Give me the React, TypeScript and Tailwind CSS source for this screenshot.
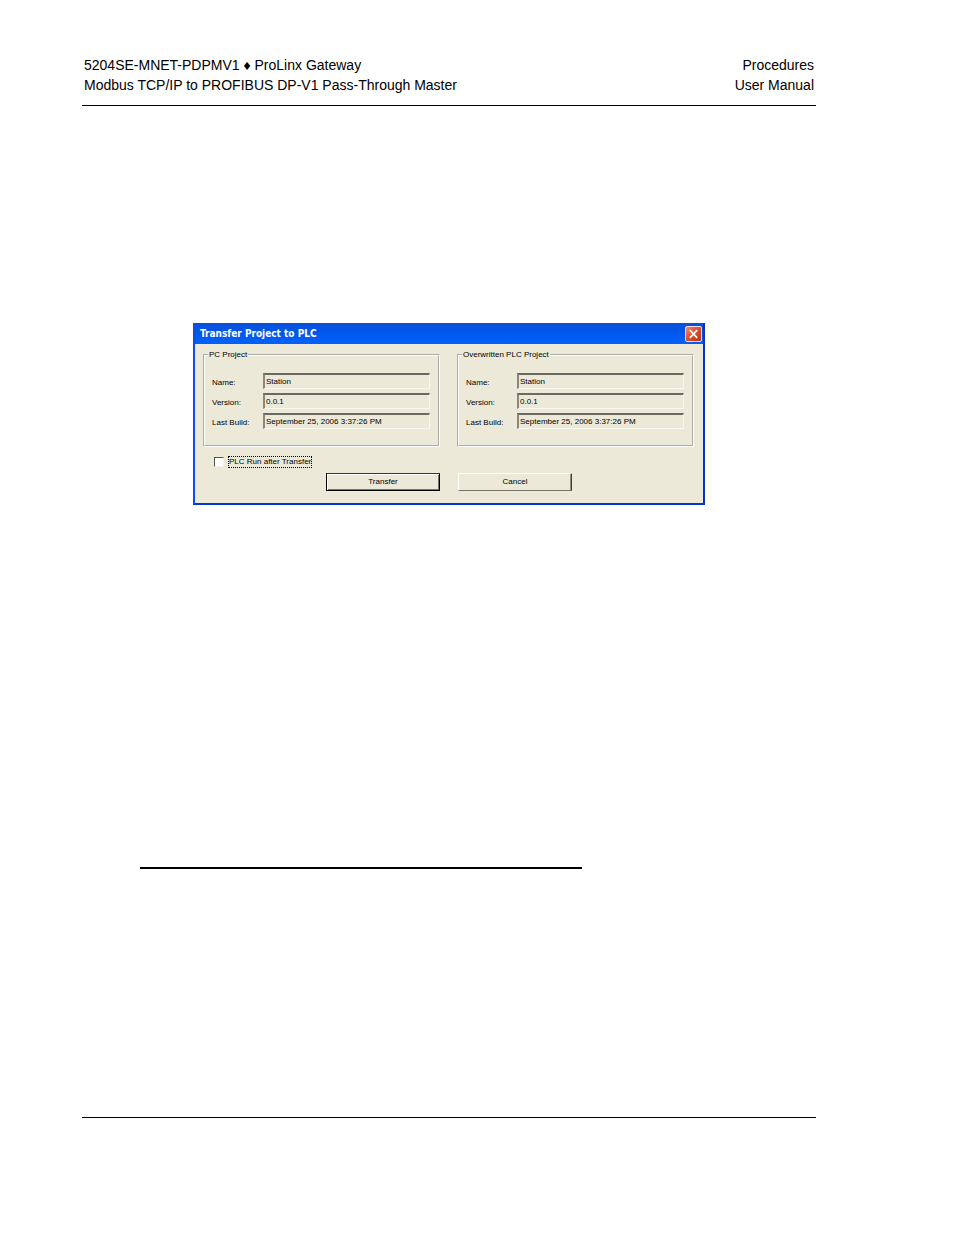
type ProjectInfo = {
  id: string;
  title: string;
  name: string;
  version: string;
  lastBuild: string;
};

const projects: ProjectInfo[] = [
  { id: "pc", title: "PC Project", name: "Station", version: "0.0.1", lastBuild: "September 25, 2006 3:37:26 PM" },
  { id: "plc", title: "Overwritten PLC Project", name: "Station", version: "0.0.1", lastBuild: "September 25, 2006 3:37:26 PM" },
];

function Field({ id, label, value }: { id: string; label: string; value: string }) {
  return (
    <div className="flex h-4 items-stretch">
      <label htmlFor={id} className="w-[51px] shrink-0 pt-1 whitespace-nowrap">
        {label}
      </label>
      <input
        id={id}
        readOnly
        defaultValue={value}
        className="min-w-0 flex-1 border-t-2 border-r border-b border-l-2 border-t-[#6b6a62] border-r-[#f8f7f0] border-b-[#f8f7f0] border-l-[#8a887d] bg-[#ece9d8] pl-px outline-none"
      />
    </div>
  );
}

function ProjectGroup({ project }: { project: ProjectInfo }) {
  return (
    <fieldset className="min-w-0 border-2 border-white pt-3 pb-4 [border-style:groove]">
      <legend className="ml-[3px] px-px leading-3">{project.title}</legend>
      <div className="flex flex-col gap-1 pr-2 pl-[7px]">
        <Field id={`${project.id}-name`} label="Name:" value={project.name} />
        <Field id={`${project.id}-version`} label="Version:" value={project.version} />
        <Field id={`${project.id}-build`} label="Last Build:" value={project.lastBuild} />
      </div>
    </fieldset>
  );
}

function TransferDialog() {
  return (
    <section
      aria-label="Transfer Project to PLC"
      className="w-full max-w-[512px] border-x-2 border-b-2 border-l-[#0a50e8] border-r-[#0430c8] border-b-[#0438d0] bg-[#ece9d8] font-['Liberation_Sans',sans-serif] text-[8px] leading-3 text-black"
    >
      <div className="flex h-[21px] items-center justify-between bg-linear-to-b from-[#0a4fd8] via-[#0058ee] to-[#0062fb] pr-px pl-[5px]">
        <h1 className="font-['DejaVu_Sans_Condensed','DejaVu_Sans',sans-serif] text-[10px] font-bold text-white">
          Transfer Project to PLC
        </h1>
        <button type="button" aria-label="Close">
          <svg viewBox="0 0 17 16" className="block h-4 w-[17px]">
            <defs>
              <linearGradient id="close-face" x1="0" y1="0" x2="1" y2="1">
                <stop offset="0" stopColor="#f09078" />
                <stop offset="0.45" stopColor="#e05030" />
                <stop offset="1" stopColor="#b83210" />
              </linearGradient>
            </defs>
            <rect x="0.5" y="0.5" width="16" height="15" rx="1.5" fill="url(#close-face)" stroke="#f4d8d8" />
            <path d="M4.8 4.2 L12.2 11.8 M12.2 4.2 L4.8 11.8" stroke="#fff" strokeWidth="1.7" />
          </svg>
        </button>
      </div>
      <div className="pt-[5px] pr-[9px] pb-3 pl-2">
        <div className="grid grid-cols-2 gap-[17px]">
          {projects.map((project) => (
            <ProjectGroup key={project.id} project={project} />
          ))}
        </div>
        <div className="mt-[9px] flex items-center gap-1 pl-[11px]">
          <input
            id="run-after"
            type="checkbox"
            className="size-[10px] appearance-none border border-t-[#55544d] border-r-[#f4f2e6] border-b-[#f4f2e6] border-l-[#55544d] bg-white"
          />
          <label htmlFor="run-after" className="border border-dotted border-black leading-[10px]">
            PLC Run after Transfer
          </label>
        </div>
        <div className="mt-[5px] flex gap-[18px] pl-[123px]">
          <button
            type="button"
            className="h-[18px] w-[114px] border border-t-[#3a3932] border-r-black border-b-black border-l-black shadow-[inset_1px_1px_0_#fff,inset_-1px_-1px_0_#77756a]"
          >
            Transfer
          </button>
          <button
            type="button"
            className="h-[18px] w-[114px] border border-t-white border-r-[#3f3e38] border-b-[#77756a] border-l-white shadow-[inset_-1px_0_0_#8f8d80]"
          >
            Cancel
          </button>
        </div>
      </div>
    </section>
  );
}

export default function App() {
  return (
    <main className="flex min-h-screen flex-col bg-white pt-[55px] pr-[138px] pb-[117px] pl-[82px]">
      <header className="flex justify-between border-b border-black px-[2px] pb-[10px] font-['Liberation_Sans',sans-serif] text-[14px] leading-5 text-black">
        <p>
          5204SE-MNET-PDPMV1 ♦ ProLinx Gateway
          <br />
          Modbus TCP/IP to PROFIBUS DP-V1 Pass-Through Master
        </p>
        <p className="text-right">
          Procedures
          <br />
          User Manual
        </p>
      </header>
      <div className="mt-[217px] pl-[111px]">
        <TransferDialog />
      </div>
      <div className="mt-[362px] pl-[58px]">
        <hr className="max-w-[442px] border-t-2 border-black" />
      </div>
      <footer className="mt-auto border-t border-black" />
    </main>
  );
}
